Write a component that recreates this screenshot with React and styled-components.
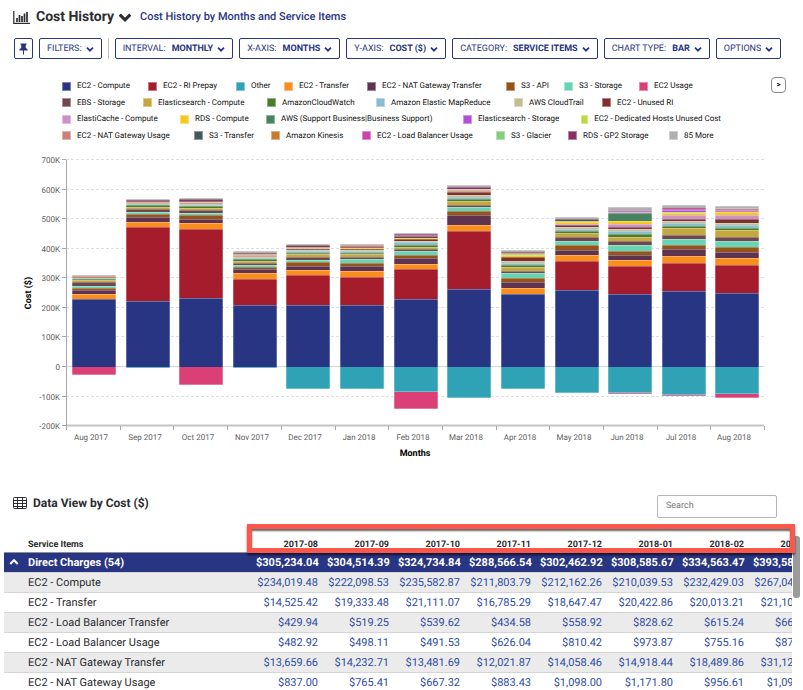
import React from "react";
import styled, { createGlobalStyle } from "styled-components";

const GlobalStyle = createGlobalStyle`
  * { box-sizing: border-box; }
  body {
    margin: 0;
    background: #fff;
    color: #2c2c30;
    font-family: Roboto, Arial, sans-serif;
    text-rendering: geometricPrecision;
  }
  button, input { font-family: inherit; text-rendering: inherit; }
`;

const navy = "#283583";

const Page = styled.main`
  height: 100vh;
  overflow: hidden;
`;

const TitleBar = styled.header`
  display: flex;
  align-items: center;
  height: 34px;
  padding-left: 13px;
`;

const Title = styled.h1`
  margin: 0 4px 0 6px;
  font-size: 14px;
  font-weight: 700;
  line-height: 20px;
`;

const TitleToggle = styled.button`
  display: flex;
  margin: 0 8px 0 0;
  padding: 0;
  border: 0;
  background: none;
  color: #2c2c30;
`;

const Subtitle = styled.h2`
  margin: 0;
  font-size: 11px;
  font-weight: 500;
  line-height: 20px;
  color: ${navy};
`;

const Toolbar = styled.div`
  display: flex;
  align-items: center;
  gap: 6px;
  margin-top: 4px;
  padding-left: 14px;
`;

const ToolButton = styled.button`
  display: flex;
  flex: none;
  align-items: center;
  height: 21px;
  padding: 0 ${(p) => (p.$icon ? 4 : 7)}px;
  border: 1px solid ${navy};
  border-radius: 2px;
  background: #fff;
  color: ${navy};
  font-size: 9px;
  line-height: 12px;
  white-space: nowrap;
  svg { margin-left: ${(p) => (p.$icon ? 0 : 4)}px; }
`;

const ToolValue = styled.strong`
  margin-left: 6px;
  font-weight: 700;
`;

const Divider = styled.span`
  width: 1px;
  height: 21px;
  background: #bdbdc4;
`;

const LegendArea = styled.section`
  display: flex;
  justify-content: space-between;
  align-items: flex-start;
  margin-top: 18px;
  padding: 0 17px 0 62px;
`;

const LegendRows = styled.div`
  display: grid;
  grid-template-rows: repeat(4, 1fr);
  height: 66px;
  margin-top: 1px;
`;

const LegendRow = styled.ul`
  display: flex;
  align-items: center;
  margin: 0;
  padding: 0;
  list-style: none;
`;

const LegendItem = styled.li`
  display: flex;
  align-items: center;
  gap: 6px;
  width: ${(p) => p.$width}px;
  font-size: 8px;
  line-height: 12px;
  color: #111;
  white-space: nowrap;
`;

const Swatch = styled.span`
  width: 9px;
  height: 9px;
  background: ${(p) => p.$color};
  border: 1px solid rgba(255, 255, 255, 0.4);
`;

const MoreButton = styled.button`
  width: 15px;
  height: 16px;
  padding: 0;
  border: 1px solid #8a8a8a;
  border-radius: 4px;
  background: #fff;
  color: #000;
  font-size: 8px;
  font-weight: 700;
  line-height: 12px;
`;

const Plot = styled.svg`
  display: block;
  width: 100%;
  height: auto;
  margin-top: 6px;
`;

const AxisText = styled.text`
  font-size: 8px;
  fill: #5e5e5e;
  text-anchor: ${(p) => p.$anchor};
`;

const AxisTitle = styled.text`
  font-size: 9px;
  font-weight: 700;
  fill: #000;
  text-anchor: middle;
`;

const DataHeader = styled.div`
  display: flex;
  align-items: center;
  justify-content: space-between;
  margin-top: 29px;
  padding: 0 26px 0 13px;
`;

const DataTitle = styled.h2`
  display: flex;
  align-items: center;
  gap: 6px;
  margin: 0 0 6px;
  font-size: 12px;
  font-weight: 700;
  line-height: 18px;
`;

const Search = styled.input`
  width: 120px;
  height: 23px;
  padding: 0 8px;
  border: 1px solid #b5b5b5;
  border-radius: 2px;
  font-size: 9px;
  color: #333;
  &::placeholder { color: #777; opacity: 1; }
`;

const TableFrame = styled.section`
  position: relative;
  margin-top: 15px;
  padding: 0 11px 0 4px;
`;

const TableClip = styled.div`
  overflow: hidden;
`;

const Table = styled.table`
  width: 820px;
  table-layout: fixed;
  border-collapse: collapse;
  font-size: 11px;
`;

const ToggleCol = styled.col`
  width: 24px;
`;

const MonthCol = styled.col`
  width: 71px;
`;

const HeadCell = styled.th`
  height: 19px;
  padding: 6px ${(p) => (p.$left ? 0 : 9)}px 0 0;
  border-bottom: 1px solid #8f8f8f;
  font-size: 9px;
  font-weight: 700;
  line-height: 12px;
  text-align: ${(p) => (p.$left ? "left" : "right")};
`;

const Row = styled.tr`
  height: 20px;
  background: ${(p) => (p.$group ? navy : p.$shade ? "#ebebeb" : "#fff")};
  color: ${(p) => (p.$group ? "#fff" : "inherit")};
  font-weight: ${(p) => (p.$group ? 700 : 400)};
`;

const Cell = styled.td`
  padding: 0 ${(p) => (p.$amount ? 9 : 0)}px 0 0;
  border-bottom: 1px solid #d5d5d5;
  font-weight: inherit;
  line-height: 19px;
  text-align: ${(p) => (p.$amount ? "right" : "left")};
  white-space: nowrap;
`;

const AmountLink = styled.a`
  color: #2f4ba3;
  text-decoration: none;
`;

const RowToggle = styled.button`
  display: flex;
  padding: 0 0 0 5px;
  border: 0;
  background: none;
  color: #fff;
`;

const Highlight = styled.div`
  position: absolute;
  top: -9px;
  left: 247px;
  right: 8px;
  height: 29px;
  border: 5px solid #fb584b;
  box-shadow: 0 2px 2px rgba(0, 0, 0, 0.6), inset 0 2px 2px rgba(0, 0, 0, 0.6);
`;

const ScrollThumb = styled.div`
  position: absolute;
  top: 3px;
  right: 3px;
  width: 7px;
  height: 62px;
  border-radius: 3px;
  background: #9b9b9b;
`;

const Chevron = ({ size = 8, up = false }) => (
  <svg width={size} height={size} viewBox="0 0 12 12" aria-hidden="true">
    <path d={up ? "M1.5 8.5 6 4l4.500 4.500" : "M1.500 4 6 8.500 10.500 4"} fill="none" stroke="currentColor" strokeWidth="2.600" />
  </svg>
);

const ChartIcon = () => (
  <svg width="17" height="13" viewBox="0 0 17 13" aria-hidden="true">
    <path d="M.8 0v12.300H17" fill="none" stroke="#2c2c30" strokeWidth="1.200" />
    <path d="M4 7v4M6.500 4v7M9 5v6M11.500 2.500V11M14 1v10" stroke="#2c2c30" strokeWidth="1.700" />
  </svg>
);

const PinIcon = () => (
  <svg width="9" height="12" viewBox="0 0 9 12" aria-hidden="true">
    <path d="M1.500.5h6v1.300H6.800V5c1.200.5 1.900 1.300 1.900 2.500H5V11l-.5 1-.5-1V7.500H.3C.3 6.300 1 5.500 2.200 5V1.800h-.7z" fill={navy} />
  </svg>
);

const TableIcon = () => (
  <svg width="14" height="12" viewBox="0 0 14 12" aria-hidden="true">
    <rect x=".5" y=".5" width="13" height="11" rx="1" fill="none" stroke="#2c2c30" />
    <path d="M.5 3.500h13M.5 6.500h13M.5 9.500h13M4.500 1v10.500M9.500 1v10.500" stroke="#2c2c30" strokeWidth="1" />
  </svg>
);

const C = {
  compute: navy, prepay: "#a51c2d", other: "#2fa3b5", transfer: "#f98e1d", nat: "#5f3350",
  api: "#965418", s3: "#67d5b5", usage: "#da4075", ebs: "#70464f", es: "#c2a83f",
  watch: "#487d2b", emr: "#87bfd0", trail: "#c5bc94", unused: "#80302a", cache: "#cc92c8",
  rds: "#f5c81e", support: "#478262", esStore: "#b350d9", hosts: "#c0d63d", natUse: "#c98076",
  s3Transfer: "#445759", kinesis: "#c77b2f", lb: "#c846ac", glacier: "#83cf7b", gp2: "#8a2f63", more: "#b0b0b0",
};

const legend = [
  [["EC2 - Compute", "compute", 86], ["EC2 - RI Prepay", "prepay", 88], ["Other", "other", 48], ["EC2 - Transfer", "transfer", 83], ["EC2 - NAT Gateway Transfer", "nat", 139], ["S3 - API", "api", 58], ["S3 - Storage", "s3", 75], ["EC2 Usage", "usage", 60]],
  [["EBS - Storage", "ebs", 81], ["Elasticsearch - Compute", "es", 124], ["AmazonCloudWatch", "watch", 109], ["Amazon Elastic MapReduce", "emr", 138], ["AWS CloudTrail", "trail", 88], ["EC2 - Unused RI", "unused", 80]],
  [["ElastiCache - Compute", "cache", 118], ["RDS - Compute", "rds", 86], ["AWS (Support Business|Business Support)", "support", 197], ["Elasticsearch - Storage", "esStore", 118], ["EC2 - Dedicated Hosts Unused Cost", "hosts", 140]],
  [["EC2 - NAT Gateway Usage", "natUse", 132], ["S3 - Transfer", "s3Transfer", 77], ["Amazon Kinesis", "kinesis", 91], ["EC2 - Load Balancer Usage", "lb", 134], ["S3 - Glacier", "glacier", 72], ["RDS - GP2 Storage", "gp2", 101], ["85 More", "more", 50]],
];

/* Each stack lists "service:level", the level being the segment's outer edge measured from zero. */
const months = [
  ["Aug 2017", "compute:68 transfer:73 nat:77 api:79 s3:81 ebs:85 es:87 watch:88 emr:89 natUse:91 more:92", "usage:8"],
  ["Sep 2017", "compute:66 prepay:140 transfer:145 nat:150 api:153 s3:155 ebs:158 es:160 watch:162 emr:163 cache:164 es:165 ebs:166 gp2:167 more:168", "other:1"],
  ["Oct 2017", "compute:69 prepay:138 transfer:144 nat:148 api:152 s3:154 ebs:157 es:159 watch:161 trail:162 emr:163 natUse:164 trail:165 gp2:166 ebs:168 more:169", "usage:18"],
  ["Nov 2017", "compute:62 prepay:88 transfer:94 nat:98 api:100 s3:102 ebs:104 es:106 watch:108 emr:109 trail:110 natUse:111 cache:112 es:113 ebs:114 more:116", "other:1"],
  ["Dec 2017", "compute:62 prepay:92 transfer:97 nat:101 api:105 s3:107 ebs:110 es:113 watch:114 emr:116 trail:117 unused:118 trail:119 natUse:120 ebs:122 more:123", "other:22"],
  ["Jan 2018", "compute:62 prepay:90 transfer:96 nat:101 api:104 s3:108 ebs:110 es:113 watch:114 emr:116 trail:117 unused:118 rds:119 ebs:120 natUse:122 more:123", "other:22"],
  ["Feb 2018", "compute:68 prepay:98 transfer:103 nat:109 api:112 s3:116 ebs:118 es:120 watch:122 emr:125 trail:126 unused:128 rds:129 ebs:131 lb:132 ebs:133 more:134", "other:25 usage:42"],
  ["Mar 2018", "compute:78 prepay:136 transfer:142 nat:152 api:156 s3:160 ebs:162 es:166 watch:168 emr:170 trail:172 unused:175 natUse:176 trail:178 gp2:180 more:182", "other:31"],
  ["Apr 2018", "compute:73 transfer:79 nat:85 api:89 s3:94 ebs:96 es:100 watch:102 emr:104 trail:106 unused:110 rds:112 glacier:113 natUse:114 ebs:115 more:117", "other:22"],
  ["May 2018", "compute:77 prepay:106 transfer:112 nat:117 api:122 s3:126 ebs:130 es:134 watch:136 emr:138 trail:140 unused:142 cache:143 rds:145 glacier:146 ebs:148 more:150", "other:26"],
  ["Jun 2018", "compute:73 prepay:101 transfer:107 nat:112 api:116 s3:122 ebs:126 es:130 watch:133 emr:136 trail:138 unused:140 cache:143 rds:146 support:154 cache:155 lb:156 more:160", "other:26 usage:27"],
  ["Jul 2018", "compute:76 prepay:104 transfer:111 nat:118 api:122 s3:128 ebs:132 es:139 watch:141 emr:144 trail:146 unused:148 cache:152 rds:154 hosts:155 esStore:157 lb:158 gp2:159 more:162", "other:28 usage:29"],
  ["Aug 2018", "compute:74 prepay:102 transfer:109 nat:115 api:120 s3:126 ebs:130 es:137 watch:139 emr:142 trail:144 unused:148 cache:152 rds:155 esStore:156 natUse:157 lb:158 glacier:159 more:161", "other:27 usage:31"],
];

const ZERO = 217;
const STEP = 53.7;
const ticks = [700, 600, 500, 400, 300, 200, 100, 0, -100, -200];
const tickY = (v) => Math.round(ZERO - v * 0.2957) - 0.5;

const parse = (stack) => {
  let base = 0;
  return stack.split(" ").map((part) => {
    const [name, level] = part.split(":");
    const seg = { color: C[name], from: base, to: Number(level) };
    base = seg.to;
    return seg;
  });
};

const Stack = ({ x, stack, down }) =>
  parse(stack).map((s, i) => {
    const h = s.to - s.from;
    const y = down ? ZERO + s.from : ZERO - s.to;
    return (
      <g key={i}>
        <rect x={x} y={y} width="44" height={h} fill={s.color} opacity={h === 1 ? 0.75 : 1} />
        {h > 1 && <rect x={x} y={down ? y + h - 1 : y} width="44" height="1" fill="#fff" opacity=".3" />}
        <path d={`M${x + 0.5} ${y}v${h}M${x + 43.5} ${y}v${h}`} stroke="#fff" opacity=".25" />
      </g>
    );
  });

const CostChart = () => (
  <Plot viewBox="0 0 803 315" role="img" aria-label="Cost by month and service item">
    {ticks.map((v) => (
      <g key={v}>
        <path
          d={`M66 ${tickY(v)}H764`}
          stroke={v === -200 ? "#c4c4c4" : v === 0 ? "#d2d2d2" : "#dedede"}
          strokeWidth={v === -200 ? 2 : 1}
          strokeDasharray={v === 0 || v === -200 ? "none" : "3 2"}
        />
        <path d={`M62 ${tickY(v)}H66`} stroke="#a8a8a8" />
        <AxisText x="60" y={tickY(v) + 3} $anchor="end">{v === 0 ? "0" : `${v}K`}</AxisText>
      </g>
    ))}
    {months.map(([name, up, down], i) => {
      const x = Math.round(72 + i * 53.62);
      return (
        <g key={name}>
          <Stack x={x} stack={up} />
          <Stack x={x} stack={down} down />
          <AxisText x={x + 19} y="290" $anchor="middle">{name}</AxisText>
        </g>
      );
    })}
    <path d="M66.5 10V276" stroke="#a8a8a8" />
    {Array.from({ length: 14 }, (_, i) => (
      <path key={i} d={`M${Math.round(66 + i * STEP) + 0.5} 276v4`} stroke="#a8a8a8" />
    ))}
    <AxisTitle x="415" y="306">Months</AxisTitle>
    <AxisTitle transform="translate(31 143) rotate(-90)">Cost ($)</AxisTitle>
  </Plot>
);

const controls = [
  ["INTERVAL:", "MONTHLY"], ["X-AXIS:", "MONTHS"], ["Y-AXIS:", "COST ($)"],
  ["CATEGORY:", "SERVICE ITEMS"], ["CHART TYPE:", "BAR"], ["OPTIONS", null],
];

const periods = ["2017-08", "2017-09", "2017-10", "2017-11", "2017-12", "2018-01", "2018-02", "2018-03"];
const groupTotals = ["$305,234.04", "$304,514.39", "$324,734.84", "$288,566.54", "$302,462.92", "$308,585.67", "$334,563.47", "$393,584.12"];
const rows = [
  ["EC2 - Compute", "$234,019.48", "$222,098.53", "$235,582.87", "$211,803.79", "$212,162.26", "$210,039.53", "$232,429.03", "$267,044.18"],
  ["EC2 - Transfer", "$14,525.42", "$19,333.48", "$21,111.07", "$16,785.29", "$18,647.47", "$20,422.86", "$20,013.21", "$21,108.35"],
  ["EC2 - Load Balancer Transfer", "$429.94", "$519.25", "$539.62", "$434.58", "$558.92", "$828.62", "$615.24", "$668.40"],
  ["EC2 - Load Balancer Usage", "$482.92", "$498.11", "$491.53", "$626.04", "$810.42", "$973.87", "$755.16", "$873.05"],
  ["EC2 - NAT Gateway Transfer", "$13,659.66", "$14,232.71", "$13,481.69", "$12,021.87", "$14,058.46", "$14,918.44", "$18,489.86", "$31,125.60"],
  ["EC2 - NAT Gateway Usage", "$837.00", "$765.41", "$667.32", "$883.43", "$1,098.00", "$1,171.80", "$956.61", "$1,095.20"],
];

export default function App() {
  return (
    <Page>
      <GlobalStyle />
      <TitleBar>
        <ChartIcon />
        <Title>Cost History</Title>
        <TitleToggle aria-label="Choose report"><Chevron size={14} /></TitleToggle>
        <Subtitle>Cost History by Months and Service Items</Subtitle>
      </TitleBar>
      <Toolbar>
        <ToolButton $icon aria-label="Pin"><PinIcon /></ToolButton>
        <ToolButton>FILTERS: <Chevron /></ToolButton>
        <Divider />
        {controls.map(([label, value]) => (
          <ToolButton key={label}>
            {label}
            {value && <ToolValue>{value}</ToolValue>}
            <Chevron />
          </ToolButton>
        ))}
      </Toolbar>
      <LegendArea>
        <LegendRows>
          {legend.map((items, i) => (
            <LegendRow key={i}>
              {items.map(([label, name, width]) => (
                <LegendItem key={label} $width={width}><Swatch $color={C[name]} />{label}</LegendItem>
              ))}
            </LegendRow>
          ))}
        </LegendRows>
        <MoreButton aria-label="Next legend page">&gt;</MoreButton>
      </LegendArea>
      <CostChart />
      <DataHeader>
        <DataTitle><TableIcon />Data View by Cost ($)</DataTitle>
        <Search type="search" placeholder="Search" aria-label="Search" />
      </DataHeader>
      <TableFrame>
        <TableClip>
          <Table>
            <colgroup>
              <ToggleCol />
              <col />
              {periods.map((p) => <MonthCol key={p} />)}
            </colgroup>
            <thead>
              <tr>
                <HeadCell $left />
                <HeadCell $left scope="col">Service Items</HeadCell>
                {periods.map((p) => <HeadCell key={p} scope="col">{p}</HeadCell>)}
              </tr>
            </thead>
            <tbody>
              <Row $group>
                <Cell><RowToggle aria-label="Collapse Direct Charges"><Chevron size={10} up /></RowToggle></Cell>
                <Cell as="th" scope="row">Direct Charges (54)</Cell>
                {groupTotals.map((t) => <Cell key={t} $amount>{t}</Cell>)}
              </Row>
              {rows.map(([name, ...amounts], i) => (
                <Row key={name} $shade={i % 2 === 0}>
                  <Cell />
                  <Cell as="th" scope="row">{name}</Cell>
                  {amounts.map((a, j) => <Cell key={j} $amount><AmountLink href="#">{a}</AmountLink></Cell>)}
                </Row>
              ))}
            </tbody>
          </Table>
        </TableClip>
        <ScrollThumb />
        <Highlight />
      </TableFrame>
    </Page>
  );
}
